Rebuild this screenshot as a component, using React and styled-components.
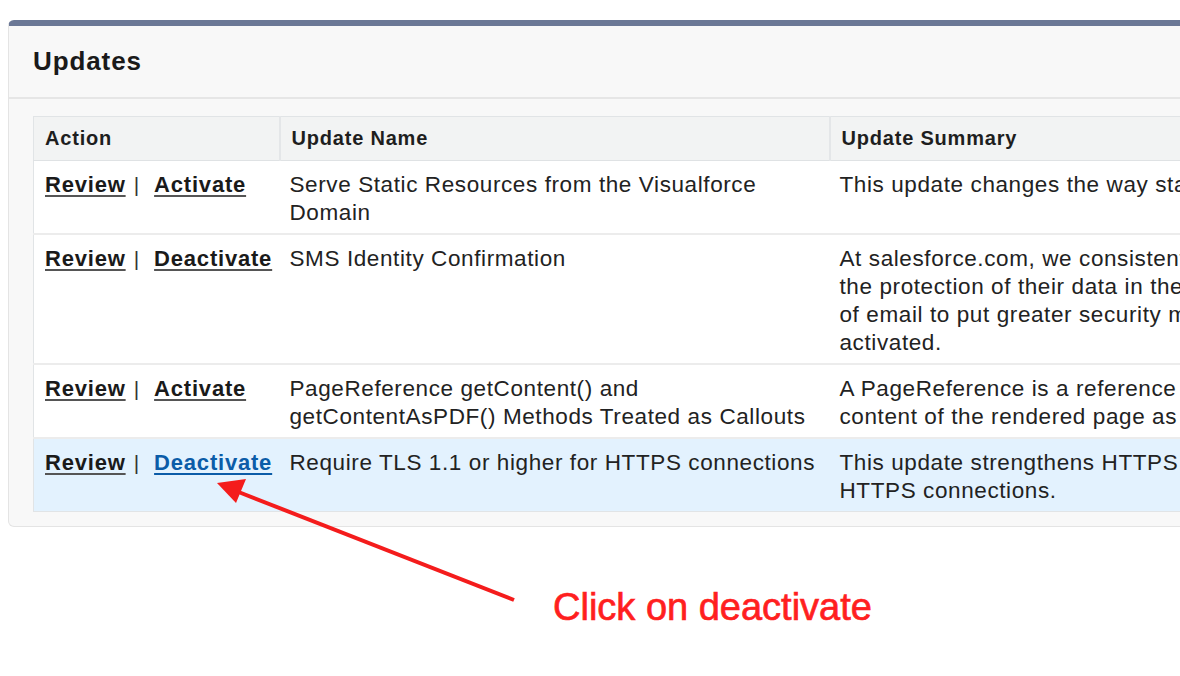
import React from "react";
import styled, { createGlobalStyle } from "styled-components";

const GlobalStyle = createGlobalStyle`
    body {
        margin: 0;
        background: #ffffff;
        font-family: "Liberation Sans", Arial, sans-serif;
        overflow: hidden;
    }
`;

const Page = styled.div`
    position: relative;
    width: 1180px;
    height: 676px;
    overflow: hidden;
    padding-top: 20px;
    box-sizing: border-box;
`;

const Panel = styled.section`
    margin-left: 8px;
    width: 1400px;
    background: #f8f8f8;
    border: 1px solid #e4e4e4;
    border-top: 6px solid #6b7896;
    border-radius: 6px;
    padding-bottom: 14px;
`;

const PanelHeader = styled.div`
    height: 71px;
    display: flex;
    align-items: center;
    padding-left: 24px;
    border-bottom: 2px solid #e6e6e6;
`;

const Title = styled.h2`
    margin: 0;
    font-size: 26px;
    font-weight: bold;
    letter-spacing: 0.9px;
    color: #1a1a1a;
`;

const Table = styled.table`
    margin: 17px 0 0 24px;
    border-collapse: collapse;
    table-layout: fixed;
    width: 1360px;
    background: #ffffff;
    border: 1px solid #e1e4e6;
`;

const HeadCell = styled.th`
    box-sizing: border-box;
    width: ${(p) => p.w}px;
    height: 44px;
    padding: 0 11px;
    text-align: left;
    font-size: 20px;
    font-weight: bold;
    letter-spacing: 0.8px;
    color: #1e1e1e;
    background: #f2f3f3;
    border-left: 2px solid #e4e6e8;
    border-bottom: 1px solid #dfe2e4;
    &:first-child {
        border-left: none;
    }
`;

const Row = styled.tr`
    background: ${(p) => (p.highlight ? "#e3f2fe" : "#ffffff")};
    border-top: 2px solid #ececec;
    &:first-child {
        border-top: none;
    }
`;

const Cell = styled.td`
    vertical-align: top;
    padding: 10px 6px 6px 10px;
    font-size: 22.5px;
    letter-spacing: 0.6px;
    line-height: 28px;
    color: #222222;
    white-space: ${(p) => (p.nowrap ? "nowrap" : "normal")};
    &:first-child {
        padding-left: 11px;
        letter-spacing: 0;
    }
`;

const ActionLink = styled.a`
    font-size: 22px;
    font-weight: bold;
    letter-spacing: 0.8px;
    color: ${(p) => (p.active ? "#0b5ca8" : "#1a1a1a")};
    text-decoration: underline;
    text-decoration-color: ${(p) => (p.active ? "#0b5ca8" : "#555555")};
    text-underline-offset: 3px;
    cursor: pointer;
`;

const Separator = styled.span`
    margin: 0 15px 0 8px;
    font-size: 21px;
    color: #333333;
`;

const Annotation = styled.div`
    padding: 59px 0 0 553px;
`;

const Callout = styled.p`
    margin: 0;
    font-size: 38px;
    line-height: 42px;
    font-weight: normal;
    color: #ff1f1f;
    -webkit-text-stroke: 0.7px #ff1f1f;
`;

const ArrowLayer = styled.svg`
    position: absolute;
    left: 0;
    top: 0;
    pointer-events: none;
`;

const updates = [
    {
        toggle: "Activate",
        name: "Serve Static Resources from the Visualforce Domain",
        summary: ["This update changes the way static resources are served from the Visualforce domain"],
    },
    {
        toggle: "Deactivate",
        name: "SMS Identity Confirmation",
        summary: [
            "At salesforce.com, we consistently take steps to help our customers ensure",
            "the protection of their data in the cloud. This update uses SMS instead",
            "of email to put greater security measures in place when this update is",
            "activated.",
        ],
    },
    {
        toggle: "Activate",
        name: "PageReference getContent() and getContentAsPDF() Methods Treated as Callouts",
        summary: [
            "A PageReference is a reference to an instantiation of a page. The",
            "content of the rendered page as a string is returned by getContent().",
        ],
    },
    {
        toggle: "Deactivate",
        name: "Require TLS 1.1 or higher for HTTPS connections",
        summary: [
            "This update strengthens HTTPS security by requiring TLS 1.1 or higher for",
            "HTTPS connections.",
        ],
        highlight: true,
    },
];

function Arrow() {
    return (
        <ArrowLayer width="1180" height="676" viewBox="0 0 1180 676">
            <line x1="514" y1="600" x2="236" y2="491" stroke="#f41c1c" strokeWidth="4" />
            <polygon points="217,483 246,479 236,503" fill="#f41c1c" />
        </ArrowLayer>
    );
}

export default function App() {
    return (
        <Page>
            <GlobalStyle />
            <Panel>
                <PanelHeader>
                    <Title>Updates</Title>
                </PanelHeader>
                <Table>
                    <thead>
                        <tr>
                            <HeadCell w={246}>Action</HeadCell>
                            <HeadCell w={550}>Update Name</HeadCell>
                            <HeadCell w={564}>Update Summary</HeadCell>
                        </tr>
                    </thead>
                    <tbody>
                        {updates.map((u) => (
                            <Row key={u.name} highlight={u.highlight}>
                                <Cell nowrap>
                                    <ActionLink>Review</ActionLink>
                                    <Separator>|</Separator>
                                    <ActionLink active={u.highlight}>{u.toggle}</ActionLink>
                                </Cell>
                                <Cell>{u.name}</Cell>
                                <Cell nowrap>
                                    {u.summary.map((line, i) => (
                                        <React.Fragment key={i}>
                                            {i > 0 && <br />}
                                            {line}
                                        </React.Fragment>
                                    ))}
                                </Cell>
                            </Row>
                        ))}
                    </tbody>
                </Table>
            </Panel>
            <Annotation>
                <Callout>Click on deactivate</Callout>
            </Annotation>
            <Arrow />
        </Page>
    );
}
